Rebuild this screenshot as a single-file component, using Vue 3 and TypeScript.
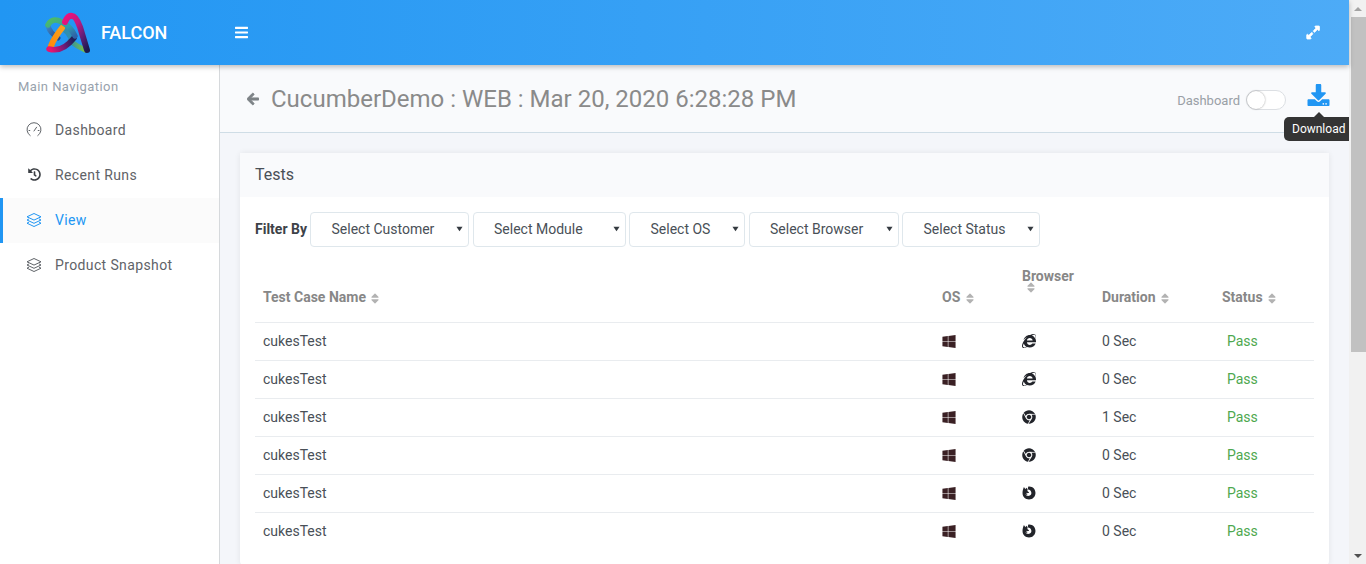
<script setup lang="ts">
interface NavItem {
  label: string
  icon: 'gauge' | 'history' | 'layers'
  active?: boolean
}

interface TestRow {
  name: string
  browser: 'ie' | 'chrome' | 'firefox'
  duration: string
  status: string
}

const navItems: NavItem[] = [
  { label: 'Dashboard', icon: 'gauge' },
  { label: 'Recent Runs', icon: 'history' },
  { label: 'View', icon: 'layers', active: true },
  { label: 'Product Snapshot', icon: 'layers' }
]

const filters = [
  { label: 'Select Customer', width: 159 },
  { label: 'Select Module', width: 153 },
  { label: 'Select OS', width: 116 },
  { label: 'Select Browser', width: 150 },
  { label: 'Select Status', width: 138 }
]

const columns = ['Test Case Name', 'OS', 'Browser', 'Duration', 'Status']

const rows: TestRow[] = [
  { name: 'cukesTest', browser: 'ie', duration: '0 Sec', status: 'Pass' },
  { name: 'cukesTest', browser: 'ie', duration: '0 Sec', status: 'Pass' },
  { name: 'cukesTest', browser: 'chrome', duration: '1 Sec', status: 'Pass' },
  { name: 'cukesTest', browser: 'chrome', duration: '0 Sec', status: 'Pass' },
  { name: 'cukesTest', browser: 'firefox', duration: '0 Sec', status: 'Pass' },
  { name: 'cukesTest', browser: 'firefox', duration: '0 Sec', status: 'Pass' }
]
</script>

<template>
  <div class="page">
    <div class="viewport">
      <header class="topbar">
        <div class="brand">
          <svg class="logo" viewBox="45 11 46 43" fill="none" stroke-linecap="round">
            <defs>
              <linearGradient id="lgOrange" x1="0" y1="1" x2="1" y2="0">
                <stop offset="0" stop-color="#ff8a0c" />
                <stop offset="1" stop-color="#f9a11c" />
              </linearGradient>
              <linearGradient id="lgPurple" x1="0" y1="0" x2="1" y2="1">
                <stop offset="0" stop-color="#f0127a" />
                <stop offset="0.4" stop-color="#c01a80" />
                <stop offset="0.7" stop-color="#5f1f78" />
                <stop offset="1" stop-color="#1b1a4e" />
              </linearGradient>
              <linearGradient id="lgBase" x1="0" y1="0.6" x2="1" y2="0.4">
                <stop offset="0" stop-color="#e8146f" />
                <stop offset="0.5" stop-color="#7c1a7a" />
                <stop offset="1" stop-color="#20205a" />
              </linearGradient>
              <linearGradient id="lgGreen" x1="0" y1="0" x2="1" y2="1">
                <stop offset="0" stop-color="#4fbd62" />
                <stop offset="0.6" stop-color="#2f9cae" />
                <stop offset="1" stop-color="#2f62a8" />
              </linearGradient>
              <linearGradient id="lgGreenLow" x1="0" y1="0" x2="1" y2="0">
                <stop offset="0" stop-color="#2f8fa5" />
                <stop offset="1" stop-color="#7cc242" />
              </linearGradient>
              <linearGradient id="lgBlue" x1="0" y1="0" x2="1" y2="1">
                <stop offset="0" stop-color="#3f86c4" />
                <stop offset="1" stop-color="#23478c" />
              </linearGradient>
            </defs>
            <path d="M70 41Q78 47 85 50" stroke="url(#lgGreenLow)" stroke-width="5" />
            <path d="M48 26Q50 33 58 38" stroke="url(#lgBlue)" stroke-width="5" />
            <path d="M64 27Q70 31 72 36" stroke="#2f8fb0" stroke-width="9" />
            <path d="M51 46Q54 38 62 28" stroke="url(#lgOrange)" stroke-width="6" />
            <path d="M49 49Q62 53 74 38" stroke="url(#lgBase)" stroke-width="5.5" />
            <path d="M48 25Q52 17 62 22Q71 27 75 36" stroke="url(#lgGreen)" stroke-width="5.5" />
            <path d="M65 22Q68 15 72 16Q76 16 80 27L87 50" stroke="url(#lgPurple)" stroke-width="6" />
          </svg>
          <span class="brand-name">FALCON</span>
        </div>
        <svg class="icon-bars" viewBox="0 0 448 512" fill="currentColor">
          <path d="M16 132h416c8.837 0 16-7.163 16-16V76c0-8.837-7.163-16-16-16H16C7.163 60 0 67.163 0 76v40c0 8.837 7.163 16 16 16zm0 160h416c8.837 0 16-7.163 16-16v-40c0-8.837-7.163-16-16-16H16c-8.837 0-16 7.163-16 16v40c0 8.837 7.163 16 16 16zm0 160h416c8.837 0 16-7.163 16-16v-40c0-8.837-7.163-16-16-16H16c-8.837 0-16 7.163-16 16v40c0 8.837 7.163 16 16 16z" />
        </svg>
        <svg class="icon-expand" viewBox="0 0 448 512" fill="currentColor" stroke="currentColor" stroke-width="24">
          <path d="M212.686 315.314L120 408l32.922 31.029c15.12 15.12 4.412 40.971-16.97 40.971h-112C20.697 480 8 467.255 8 453.992v-112c0-21.382 25.803-32.09 40.922-16.971L80 352l92.686-92.686c6.248-6.248 16.379-6.248 22.627 0l17.373 17.373c6.249 6.248 6.249 16.378 0 22.627zm22.628-118.628L328 104l-32.922-31.029C279.958 57.851 290.666 32 312.048 32h112C437.303 32 448 42.745 448 56.008v112c0 21.382-25.803 32.09-40.922 16.971L376 152l-92.686 92.686c-6.248 6.248-16.379 6.248-22.627 0l-17.373-17.373c-6.249-6.248-6.249-16.378 0-22.627z" />
        </svg>
      </header>

      <div class="shell">
        <aside class="sidebar">
          <div class="nav-title">Main Navigation</div>
          <nav>
            <a v-for="item in navItems" :key="item.label" class="nav-item" :class="{ active: item.active }">
              <svg v-if="item.icon === 'gauge'" class="nav-icon" viewBox="0 0 16 16" fill="none" stroke="currentColor" stroke-width="1" stroke-linecap="round">
                <path d="M4.2 13.6A7 7 0 1 1 11.8 13.6" />
                <path d="M8 9L10.6 5.2" />
                <path d="M3 8.5H3.8M12.2 8.5H13" />
              </svg>
              <svg v-else-if="item.icon === 'history'" class="nav-icon history" viewBox="0 0 512 512" fill="currentColor">
                <path d="M504 255.531c.253 136.64-111.18 248.372-247.82 248.468-59.015.042-113.223-20.53-155.822-54.911-11.077-8.94-11.905-25.541-1.839-35.607l11.267-11.267c8.609-8.609 22.353-9.551 31.891-1.984C173.062 425.135 212.781 440 256 440c101.705 0 184-82.311 184-184 0-101.705-82.311-184-184-184-48.814 0-93.149 18.969-126.068 49.932l50.754 50.754c10.08 10.08 2.941 27.314-11.313 27.314H24c-8.837 0-16-7.163-16-16V38.627c0-14.254 17.234-21.393 27.314-11.314l49.372 49.372C129.209 34.136 189.552 8 256 8c136.81 0 247.747 110.78 248 247.531zm-180.912 78.784l9.823-12.63c8.138-10.463 6.253-25.542-4.21-33.679L288 256.349V152c0-13.255-10.745-24-24-24h-16c-13.255 0-24 10.745-24 24v135.651l65.409 50.874c10.463 8.137 25.541 6.253 33.679-4.21z" />
              </svg>
              <svg v-else class="nav-icon" viewBox="0 0 16 16" fill="none" stroke="currentColor" stroke-width="1" stroke-linejoin="round">
                <path d="M8 1.5L15 4.8L8 8.1L1 4.8Z" />
                <path d="M3 6.9L1 8L8 11.3L15 8L13 6.9" />
                <path d="M3 10.1L1 11.2L8 14.5L15 11.2L13 10.1" />
              </svg>
              <span>{{ item.label }}</span>
            </a>
          </nav>
        </aside>

        <main class="content">
          <div class="title-bar">
            <svg class="icon-back" viewBox="0 0 448 512" fill="currentColor" stroke="currentColor" stroke-width="36">
              <path d="M257.5 445.1l-22.2 22.2c-9.4 9.4-24.6 9.4-33.9 0L7 273c-9.4-9.4-9.4-24.6 0-33.9L201.4 44.7c9.4-9.4 24.6-9.4 33.9 0l22.2 22.2c9.5 9.5 9.3 25-.4 34.3L136.6 216H424c13.3 0 24 10.7 24 24v32c0 13.3-10.7 24-24 24H136.6l120.5 114.8c9.8 9.3 10 24.8.4 34.3z" />
            </svg>
            <h1 class="run-title">CucumberDemo : WEB : Mar 20, 2020 6:28:28 PM</h1>
            <div class="title-actions">
              <span class="toggle-label">Dashboard</span>
              <span class="toggle"><span class="knob"></span></span>
              <div class="download">
                <svg class="icon-download" viewBox="0 0 512 512" fill="currentColor">
                  <path d="M216 0h80c13.3 0 24 10.7 24 24v168h87.7c17.8 0 26.7 21.5 14.1 34.1L269.7 378.3c-7.5 7.5-19.8 7.5-27.3 0L90.1 226.1c-12.6-12.6-3.7-34.1 14.1-34.1H192V24c0-13.3 10.7-24 24-24zm296 376v112c0 13.3-10.7 24-24 24H24c-13.3 0-24-10.7-24-24V376c0-13.3 10.7-24 24-24h146.7l49 49c20.1 20.1 52.5 20.1 72.6 0l49-49H488c13.3 0 24 10.7 24 24zm-124 88c0-11-9-20-20-20s-20 9-20 20 9 20 20 20 20-9 20-20zm64 0c0-11-9-20-20-20s-20 9-20 20 9 20 20 20 20-9 20-20z" />
                </svg>
                <div class="tooltip">Download</div>
              </div>
            </div>
          </div>

          <section class="card">
            <div class="card-header">Tests</div>
            <div class="card-body">
              <div class="filters">
                <span class="filter-label">Filter By</span>
                <div v-for="f in filters" :key="f.label" class="filter" :style="{ width: f.width + 'px' }">
                  <span>{{ f.label }}</span>
                  <svg class="caret" viewBox="0 0 8 6" fill="currentColor"><path d="M0.5 0.5H7.5L4 5.5Z" /></svg>
                </div>
              </div>

              <table class="tests">
                <colgroup>
                  <col class="c-name" />
                  <col class="c-os" />
                  <col class="c-browser" />
                  <col class="c-duration" />
                  <col class="c-status" />
                </colgroup>
                <thead>
                  <tr>
                    <th v-for="col in columns" :key="col" :class="{ stacked: col === 'Browser' }">
                      {{ col }}
                      <svg class="sort" viewBox="0 0 320 512" fill="currentColor">
                        <path d="M41 288h238c21.4 0 32.1 25.9 17 41L177 448c-9.4 9.4-24.6 9.4-33.9 0L24 329c-15.1-15.1-4.4-41 17-41zm255-105L177 64c-9.4-9.4-24.6-9.4-33.9 0L24 183c-15.1 15.1-4.4 41 17 41h238c21.4 0 32.1-25.9 17-41z" />
                      </svg>
                    </th>
                  </tr>
                </thead>
                <tbody>
                  <tr v-for="(row, i) in rows" :key="i">
                    <td>{{ row.name }}</td>
                    <td>
                      <svg class="cell-icon windows" viewBox="0 0 448 512" fill="currentColor">
                        <path d="M0 93.7l183.6-25.3v177.4H0V93.7zm0 324.6l183.6 25.3V268.4H0v149.9zm202.8 28L448 480V268.4H202.8v177.9zm0-380.6v180.1H448V32L202.8 65.7z" />
                      </svg>
                    </td>
                    <td>
                      <svg v-if="row.browser === 'ie'" class="cell-icon" viewBox="0 0 512 512" fill="currentColor">
                        <path d="M483.049 159.706c10.855-24.575 21.424-60.438 21.424-87.871 0-72.722-79.641-98.371-209.673-38.577-107.632-7.181-211.221 73.67-237.098 186.457 30.852-34.862 78.271-82.298 121.977-101.158C125.404 166.85 79.128 228.002 43.992 291.725 23.246 329.651 0 390.94 0 436.747c0 98.575 92.854 86.5 180.251 42.006 31.423 15.43 66.559 15.573 101.695 15.573 97.124 0 184.249-54.294 216.814-146.022H377.927c-52.509 88.593-196.819 52.996-196.819-47.436H509.9c6.407-43.581-1.655-95.715-26.851-141.162zM64.559 346.877c17.711 51.15 53.703 95.871 100.266 123.304-88.741 48.94-173.267 29.096-100.266-123.304zm115.977-108.873c2-55.151 50.276-94.871 103.98-94.871 53.418 0 101.981 39.72 103.981 94.871H180.536zm184.536-187.6c21.425-10.287 48.563-22.003 72.558-22.003 31.422 0 54.274 21.717 54.274 53.722 0 20.003-7.427 49.007-14.569 67.867-26.28-42.292-65.986-81.584-112.263-99.586z" />
                      </svg>
                      <svg v-else-if="row.browser === 'chrome'" class="cell-icon" viewBox="0 0 496 512" fill="currentColor">
                        <path d="M131.5 217.5L55.1 100.1c47.6-59.2 119-91.8 192-92.1 42.3-.3 85.5 10.5 124.8 33.2 43.4 25.2 76.4 61.4 97.4 103L264 133.4c-58.1-3.4-113.4 29.3-132.5 84.1zm32.9 38.5c0 46.2 37.4 83.6 83.6 83.6s83.6-37.4 83.6-83.6-37.4-83.6-83.6-83.6-83.6 37.3-83.6 83.6zm314.9-89.2L339.6 174c37.9 44.3 38.5 108.2 6.6 157.2L234.1 503.6c46.5 2.5 94.4-7.7 137.8-32.9 107.4-62 150.9-192 107.4-303.9zM133.7 303.6L40.4 120.1C14.9 159.1 0 205.9 0 256c0 124 90.8 226.7 209.5 244.9l63.7-124.8c-57.6 10.8-113.2-20.8-139.5-72.5z" />
                      </svg>
                      <svg v-else class="cell-icon" viewBox="0 0 16 16" fill="currentColor">
                        <path fill-rule="evenodd" d="M2.2 1.2L3.9 3.6C4.3 3 4.8 2.4 5.2 2.1L6.3 4.2L7.2 .7C7.6 .6 8 .6 8.4 .6C12.4 .6 15.4 3.8 15.4 8C15.4 12.2 12.2 15.4 8 15.4C4 15.4 .6 12.4 .6 8C.6 5.6 1.2 3.4 2.2 1.2ZM6.3 4.2C8.2 3.8 10 5 10.6 7C11.1 8.9 10.2 10.6 8.2 11.2C6.2 11.6 4.6 10.8 3.8 9.4C4.6 10 5.4 10.4 6.4 10.2C5.4 9.8 5 8.8 5.3 7.8C5.9 8.2 6.6 8.3 7.6 8C8.2 7.6 8 7 7.2 6.6C6.4 6.2 6 5.2 6.3 4.2Z" />
                      </svg>
                    </td>
                    <td>{{ row.duration }}</td>
                    <td class="status">{{ row.status }}</td>
                  </tr>
                </tbody>
              </table>
            </div>
          </section>
        </main>
      </div>
    </div>

    <div class="scrollbar">
      <span class="arrow up"></span>
      <div class="track"><div class="thumb"></div></div>
      <span class="arrow down"></span>
    </div>
  </div>
</template>

<style>
html,
body {
  margin: 0;
  overflow: hidden;
}
</style>

<style scoped>
.page {
  display: flex;
  height: 564px;
  overflow: hidden;
  font-family: Roboto, "Liberation Sans", sans-serif;
  font-size: 14px;
  color: #495057;
  background: #fff;
}

.viewport {
  flex: 1;
  min-width: 0;
  display: flex;
  flex-direction: column;
}

.topbar {
  position: relative;
  z-index: 2;
  flex: none;
  height: 65px;
  display: flex;
  align-items: center;
  color: #fff;
  background: linear-gradient(90deg, #2196f3, #4dabf7);
  box-shadow: 0 2px 5px rgba(0, 0, 0, 0.25);
}

.brand {
  width: 234px;
  display: flex;
  align-items: center;
  padding-left: 45px;
  box-sizing: border-box;
}

.logo {
  width: 46px;
  height: 43px;
  flex: none;
}

.brand-name {
  margin-left: 10px;
  font-size: 18px;
  font-weight: 500;
}

.icon-bars {
  width: 13px;
  height: 15px;
  margin: 0 0 1px 1px;
}

.icon-expand {
  width: 14px;
  height: 15px;
  margin: 0 29px 1px auto;
}

.shell {
  flex: 1;
  min-height: 0;
  display: flex;
}

.sidebar {
  flex: none;
  width: 220px;
  box-sizing: border-box;
  border-right: 1px solid #d6d9dc;
  background: #fff;
}

.nav-title {
  padding: 14px 18px 0;
  font-size: 13px;
  line-height: 16px;
  letter-spacing: 0.43px;
  color: #98a2ad;
}

nav {
  margin-top: 13px;
}

.nav-item {
  height: 45px;
  box-sizing: border-box;
  display: flex;
  align-items: center;
  gap: 13px;
  padding: 0 0 2px 26px;
  letter-spacing: 0.375px;
  color: #5f6368;
}

.nav-item.active {
  padding-left: 23px;
  border-left: 3px solid #2196f3;
  color: #2196f3;
  background: #fbfbfb;
}

.nav-icon {
  width: 16px;
  height: 16px;
  flex: none;
}

.nav-icon.history {
  width: 13px;
  height: 13px;
  margin: 0 1.5px;
  color: #3b3f44;
}

.content {
  flex: 1;
  min-width: 0;
  background: #f4f6fa;
}

.title-bar {
  position: relative;
  z-index: 1;
  height: 68px;
  box-sizing: border-box;
  display: flex;
  align-items: center;
  padding: 0 19px 0 27px;
  border-bottom: 1px solid #cfdde6;
  background: #f9fafc;
}

.icon-back {
  width: 12px;
  height: 14px;
  flex: none;
  color: #7d8286;
}

.run-title {
  margin: 0 0 0 12px;
  font-size: 24px;
  font-weight: 400;
  color: #8a8a8a;
}

.title-actions {
  margin-left: auto;
  display: flex;
  align-items: center;
  padding-top: 3px;
}

.toggle-label {
  font-size: 13px;
  color: #9aa0a6;
}

.toggle {
  width: 40px;
  height: 20px;
  box-sizing: border-box;
  margin-left: 6px;
  border: 1px solid #dcdfe3;
  border-radius: 10px;
  background: #fff;
  display: flex;
}

.knob {
  width: 18px;
  height: 18px;
  border-radius: 50%;
  background: #fff;
  box-shadow: 0 0 2px rgba(0, 0, 0, 0.4);
}

.download {
  position: relative;
  display: flex;
  margin-left: 21px;
}

.icon-download {
  width: 23px;
  height: 22px;
  color: #2196f3;
  margin-top: -10px;
}

.tooltip {
  position: absolute;
  z-index: 3;
  top: 23px;
  left: -23px;
  width: 65px;
  height: 24px;
  box-sizing: border-box;
  padding-left: 8px;
  border-radius: 5px 0 0 5px;
  background: #343434;
  color: #fff;
  font-size: 12px;
  line-height: 24px;
}

.tooltip::before {
  content: "";
  position: absolute;
  top: -5px;
  left: 30px;
  border-left: 5px solid transparent;
  border-right: 5px solid transparent;
  border-bottom: 5px solid #343434;
}

.card {
  margin: 20px 20px 0;
  border-radius: 4px;
  background: #fff;
  box-shadow: 0 0 6px rgba(0, 0, 0, 0.08);
}

.card-header {
  height: 44px;
  box-sizing: border-box;
  padding: 12px 15px;
  font-size: 16px;
  line-height: 19px;
  color: #495057;
  background: #f9fafc;
}

.card-body {
  padding: 15px;
}

.filters {
  display: flex;
  align-items: center;
  gap: 3.5px;
}

.filter-label {
  padding-bottom: 2px;
  font-weight: 700;
  color: #3d4248;
  white-space: nowrap;
}

.filter {
  position: relative;
  height: 35px;
  box-sizing: border-box;
  display: flex;
  align-items: center;
  padding: 0 0 2px 20px;
  border: 1px solid #dfe7ec;
  border-radius: 4px;
  background: #fff;
  color: #495057;
}

.caret {
  position: absolute;
  right: 5px;
  top: 13px;
  width: 7px;
  height: 6px;
  color: #343a40;
}

.tests {
  width: 100%;
  margin-top: 15px;
  table-layout: fixed;
  border-collapse: collapse;
}

.c-os,
.c-browser {
  width: 80px;
}

.c-duration {
  width: 120px;
}

.c-status {
  width: 100px;
}

.tests th {
  height: 60px;
  box-sizing: border-box;
  padding: 0 8px 17px;
  text-align: left;
  vertical-align: bottom;
  font-weight: 700;
  color: #878787;
  border-bottom: 1px solid #e9ecef;
}

.tests th.stacked {
  padding: 6px 8px 0;
  vertical-align: top;
}

.tests td {
  height: 38px;
  box-sizing: border-box;
  padding: 0 8px;
  border-bottom: 1px solid #e9ecef;
}

.tests tbody tr:last-child td {
  border-bottom: none;
}

.sort {
  width: 8px;
  height: 13px;
  margin-left: 2px;
  vertical-align: -3px;
  color: #b2b2b2;
}

.stacked .sort {
  display: block;
  margin: -3px 0 0 5px;
}

.cell-icon {
  display: block;
  width: 14px;
  height: 14px;
  color: #22242a;
}

.windows {
  width: 14px;
  height: 15px;
  color: #3a2024;
}

.status {
  padding-left: 13px !important;
  color: #4ea84f;
}

.scrollbar {
  flex: none;
  width: 17px;
  display: flex;
  flex-direction: column;
  background: #f1f1f1;
}

.arrow {
  flex: none;
  height: 17px;
  display: flex;
  align-items: center;
  justify-content: center;
}

.arrow::before {
  content: "";
  border-left: 4px solid transparent;
  border-right: 4px solid transparent;
}

.arrow.up::before {
  border-bottom: 4px solid #a3a3a3;
}

.arrow.down::before {
  border-top: 4px solid #505050;
}

.track {
  flex: 1;
}

.thumb {
  height: 335px;
  margin-left: 2px;
  background: #c1c1c1;
}
</style>
